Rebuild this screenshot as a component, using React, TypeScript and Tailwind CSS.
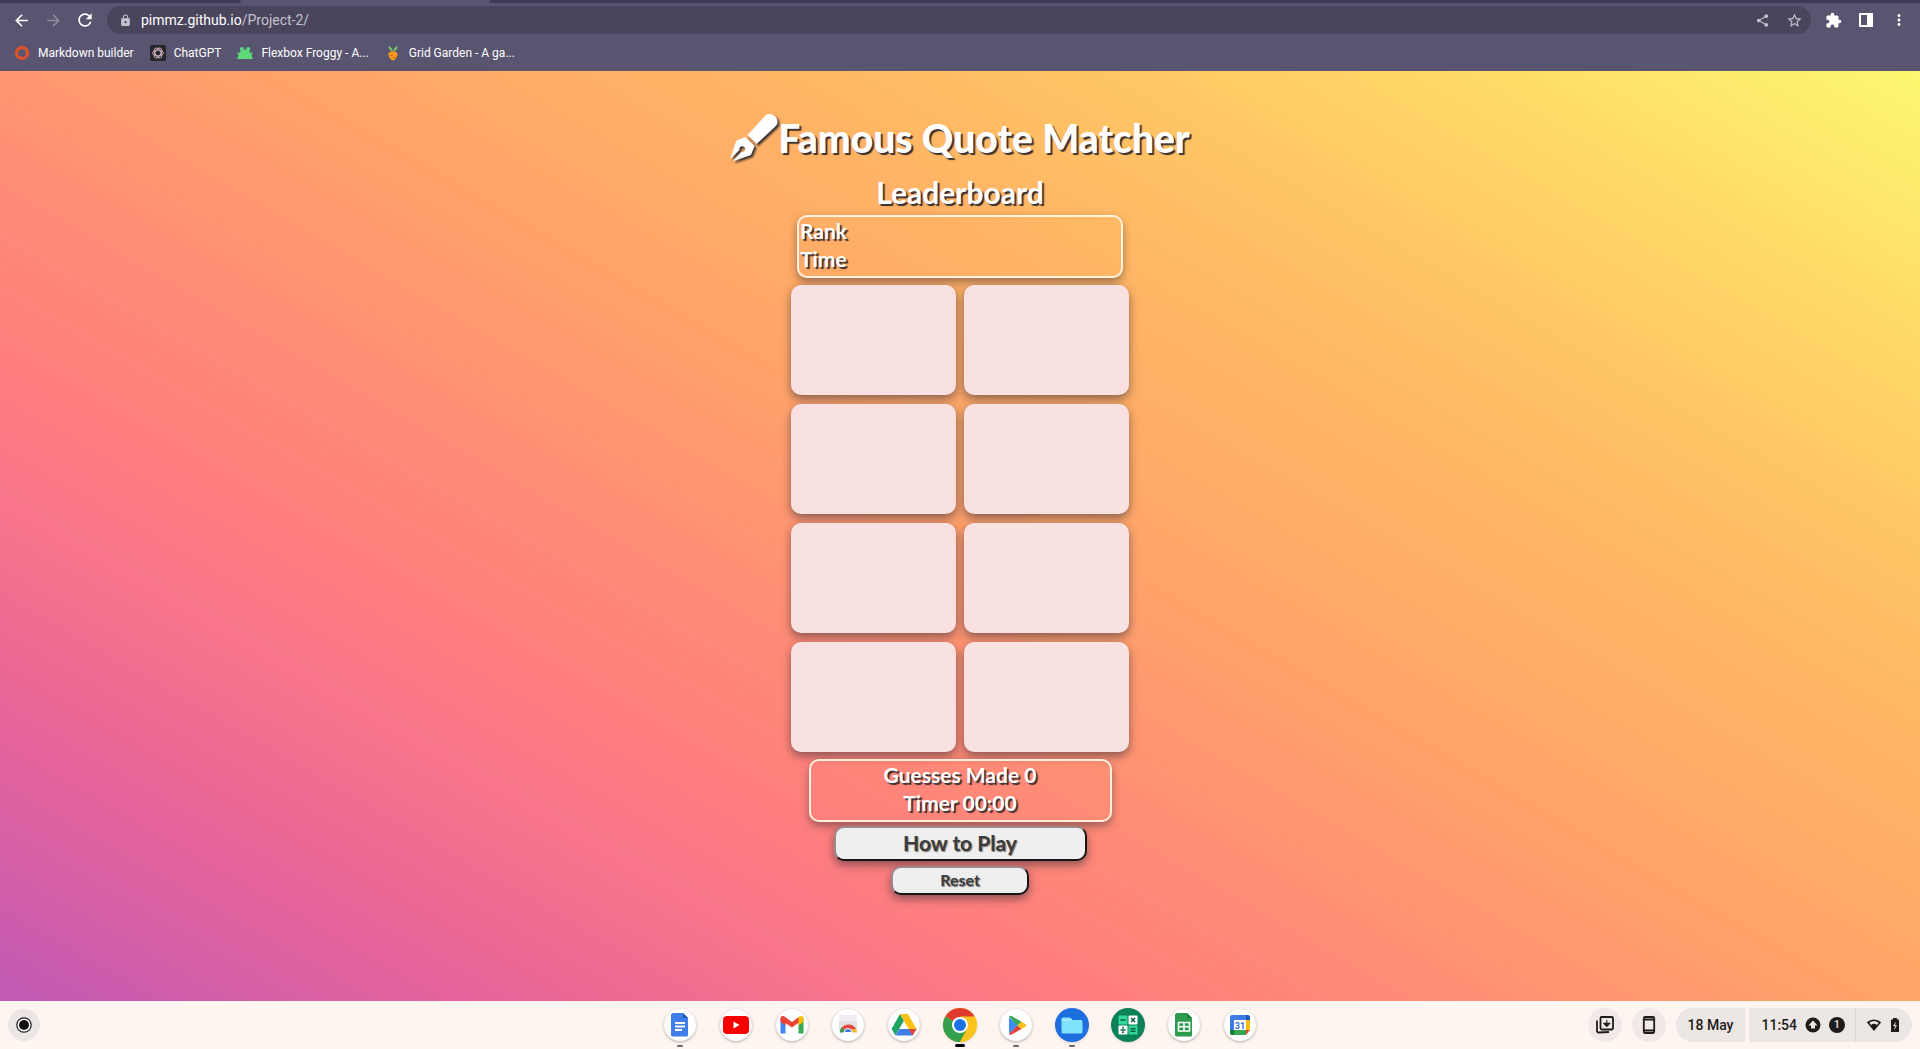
import type { ReactNode } from "react";
import {
  MdArrowBack,
  MdArrowForward,
  MdRefresh,
  MdLock,
  MdShare,
  MdStarBorder,
  MdExtension,
  MdMoreVert,
} from "react-icons/md";
import { FaPenFancy } from "react-icons/fa";

type Bookmark = { label: string; icon: ReactNode };

const bookmarks: Bookmark[] = [
  {
    label: "Markdown builder",
    icon: (
      <svg viewBox="0 0 16 16" className="size-4">
        <circle cx="8" cy="8" r="5.5" fill="none" stroke="#d9532f" strokeWidth="3.4" />
      </svg>
    ),
  },
  {
    label: "ChatGPT",
    icon: (
      <svg viewBox="0 0 16 16" className="size-4">
        <rect width="16" height="16" rx="1.5" fill="#28262b" />
        <g fill="none" stroke="#c9a9bb" strokeWidth="1">
          <ellipse cx="8" cy="8" rx="5.4" ry="2.8" />
          <ellipse cx="8" cy="8" rx="5.4" ry="2.8" transform="rotate(60 8 8)" />
          <ellipse cx="8" cy="8" rx="5.4" ry="2.8" transform="rotate(120 8 8)" />
        </g>
      </svg>
    ),
  },
  {
    label: "Flexbox Froggy - A...",
    icon: (
      <svg viewBox="0 0 16 16" className="size-4" fill="#5fd87a">
        <circle cx="4.8" cy="4" r="2" />
        <circle cx="11.2" cy="4" r="2" />
        <ellipse cx="8" cy="9" rx="5.6" ry="4.6" />
        <path d="M0 7l3 1.500h10L16 7l-1.500 3.500L16 14H0l1.500-3.500z" />
      </svg>
    ),
  },
  {
    label: "Grid Garden - A ga...",
    icon: (
      <svg viewBox="0 0 16 16" className="size-4">
        <path d="M8 6.500C7 3 5.500 1.500 3.500 1c0 3 1.500 5 4.500 5.500C11 6 12.500 4 12.500 1 10.500 1.500 9 3 8 6.500z" fill="#7cc46a" />
        <path d="M3.500 8.500C5 5.500 11 5.500 12.500 8.500c.5 3-2.500 7-4.500 7s-5-4-4.500-7z" fill="#f39a1f" />
        <path d="M5 10.500h3M8 12.500h3" stroke="#c56b10" strokeWidth="1" />
      </svg>
    ),
  },
];

type ShelfApp = { name: string; icon: ReactNode; mark?: "active" | "open" };

const apps: ShelfApp[] = [
  {
    name: "Docs",
    mark: "open",
    icon: (
      <svg viewBox="0 0 32 32">
        <path d="M9 4h10l5 5v17a1.500 1.500 0 0 1-1.500 1.500H8.500A1.500 1.500 0 0 1 7 26V6a2 2 0 0 1 2-2z" fill="#3f7de8" />
        <path d="M19 4l5 5h-5z" fill="#1f56b8" />
        <path d="M11 14h10M11 17.500h10M11 21h7" stroke="#fff" strokeWidth="1.800" />
      </svg>
    ),
  },
  {
    name: "YouTube",
    icon: (
      <svg viewBox="0 0 32 32">
        <rect x="3" y="7" width="26" height="18" rx="4" fill="#f60200" />
        <path d="M13.500 12.500v7l6-3.500z" fill="#fff" />
      </svg>
    ),
  },
  {
    name: "Gmail",
    icon: (
      <svg viewBox="0 0 32 32">
        <path d="M4.500 9v15.500h5V13z" fill="#4285f4" />
        <path d="M27.500 9v15.500h-5V13z" fill="#34a853" />
        <path d="M4.500 13V9.500c0-2.500 2.500-3 4-2L16 13l7.500-5.500 0 5.500L16 18.500 9.500 14v2.500z" fill="#ea4335" />
        <path d="M22.500 8.200l1-.7c2-1.300 4 0 4 2V13l-5 3.500z" fill="#fbbc04" />
      </svg>
    ),
  },
  {
    name: "Web Store",
    icon: (
      <svg viewBox="0 0 32 32">
        <path d="M7 6h18v6H7z" fill="#f1edf0" />
        <path d="M7 12h18v10H7z" fill="#e4e1e6" />
        <path d="M8 23.500a8.500 8.500 0 0 1 16-3.500H16z" fill="#e04a3b" />
        <path d="M8 23.500a8 8 0 0 1 2-5.500l4 5.500z" fill="#3b9b50" />
        <path d="M17 20h7a8 8 0 0 1 1 3.500h-7z" fill="#f3b72f" />
        <path d="M12 23.500a4 4 0 0 1 8 0z" fill="#4a7be0" stroke="#fff" strokeWidth="1" />
      </svg>
    ),
  },
  {
    name: "Drive",
    icon: (
      <svg viewBox="0 0 32 32">
        <path d="M12 5 3.500 20l4 6.500L16 11.500z" fill="#1fa463" />
        <path d="M12 5h8l8.500 15h-8z" fill="#fbc116" />
        <path d="M11.500 20h17l-4 6.500h-17z" fill="#3f7ee8" />
        <path d="M22.500 23.200 24.500 26.500 28.500 20h-8z" fill="#e5483a" />
      </svg>
    ),
  },
  {
    name: "Chrome",
    mark: "active",
    icon: (
      <svg viewBox="0 0 32 32" overflow="visible">
        <circle cx="16" cy="16" r="17" fill="#fbc41d" />
        <path d="M16 16 1.300 7.500A17 17 0 0 1 30.700 7.500H16z" fill="#e23b2e" />
        <path d="M16 16 1.300 7.500A17 17 0 0 0 16 33l7.400-12.700z" fill="#34a04c" />
        <path d="M16 8h14.700A17 17 0 0 1 16 33l7-13z" fill="#fbc41d" />
        <circle cx="16" cy="16" r="8" fill="#fff" />
        <circle cx="16" cy="16" r="6" fill="#1b72e6" />
      </svg>
    ),
  },
  {
    name: "Play",
    mark: "open",
    icon: (
      <svg viewBox="0 0 32 32">
        <path d="M9 8v17l9-8.500z" fill="#3f8ff0" />
        <path d="M9 7.500c.5-1 1.500-1 2.500-.5l10 5.800L17.500 16.500z" fill="#38a853" />
        <path d="M9 25c.5 1 1.500 1 2.500.5l10-5.500-4-3.500z" fill="#e5403a" />
        <path d="M21.500 12.800l4 2.300c1 .7 1 2 0 2.700l-4 2.300-4-3.600z" fill="#fbc116" />
      </svg>
    ),
  },
  {
    name: "Files",
    mark: "open",
    icon: (
      <svg viewBox="0 0 32 32" overflow="visible">
        <circle cx="16" cy="16" r="17" fill="#1d6fe0" />
        <path d="M7 8.500h7l2 2.500h9a1.500 1.500 0 0 1 1.500 1.500V23a1.500 1.500 0 0 1-1.500 1.500H7A1.500 1.500 0 0 1 5.500 23V10A1.500 1.500 0 0 1 7 8.500z" fill="#7fe3fb" />
        <path d="M6 11h8l2-1" stroke="#c5f3ff" strokeWidth="1" fill="none" />
      </svg>
    ),
  },
  {
    name: "Calculator",
    icon: (
      <svg viewBox="0 0 32 32" overflow="visible">
        <circle cx="16" cy="16" r="17" fill="#0c8259" />
        <rect x="6.500" y="6.500" width="9" height="9" rx="1" fill="#33d69a" />
        <rect x="16.500" y="6.500" width="9" height="9" rx="1" fill="#fff" />
        <rect x="6.500" y="16.500" width="9" height="9" rx="1" fill="#fff" />
        <rect x="16.500" y="16.500" width="9" height="9" rx="1" fill="#33d69a" />
        <g stroke="#0b5c41" strokeWidth="1.500">
          <path d="M8.500 11h5M19 9l4 4M23 9l-4 4M8.500 21h5M18.500 19.800h5M18.500 22.300h5" />
        </g>
        <circle cx="11" cy="18.700" r="1" fill="#0b5c41" />
        <circle cx="11" cy="23.300" r="1" fill="#0b5c41" />
      </svg>
    ),
  },
  {
    name: "Sheets",
    icon: (
      <svg viewBox="0 0 32 32">
        <path d="M9 4h10l5 5v17a1.500 1.500 0 0 1-1.500 1.500H8.500A1.500 1.500 0 0 1 7 26V6a2 2 0 0 1 2-2z" fill="#2c9b4e" />
        <path d="M19 4l5 5h-5z" fill="#187a38" />
        <path d="M10.500 13.500h11v8.500h-11zM16 13.500V22M10.500 17.700h11" stroke="#fff" strokeWidth="1.600" fill="none" />
      </svg>
    ),
  },
  {
    name: "Calendar",
    icon: (
      <svg viewBox="0 0 32 32">
        <path d="M8 6h14v5H11v14H8a2 2 0 0 1-2-2V8a2 2 0 0 1 2-2z" fill="#3c7be6" />
        <path d="M22 6h2a2 2 0 0 1 2 2v3h-4z" fill="#1a58bf" />
        <path d="M22 11h4v10h-4z" fill="#fbbc04" />
        <path d="M10 21h12v5H10z" fill="#34a853" />
        <path d="M6 21h4.500v5H8a2 2 0 0 1-2-2z" fill="#188038" />
        <path d="M22 21h4l-4 5z" fill="#ea4335" />
        <rect x="10" y="11" width="12" height="10" fill="#fff" />
        <text x="16" y="19.500" textAnchor="middle" fontSize="9" fontWeight="700" fontFamily="Roboto, sans-serif" fill="#3c6fd6">31</text>
      </svg>
    ),
  },
];

function BrowserBar() {
  return (
    <header className="bg-[#59546f] font-[Roboto,sans-serif] text-white">
      <div className="flex h-[3px] bg-[#3f3857]">
        <span className="ml-60 w-[250px] rounded-b-sm bg-[#59546f]" />
      </div>
      <div className="flex h-[34px] items-center pr-3 pl-3">
        <button aria-label="Back"><MdArrowBack size={19} /></button>
        <button aria-label="Forward" className="ml-[13px] text-[#8f8ba0]"><MdArrowForward size={19} /></button>
        <button aria-label="Reload" className="ml-3"><MdRefresh size={20} /></button>
        <div className="ml-3 flex h-7 flex-1 items-center rounded-full bg-[#4a455d] pr-2 pl-3 text-[#c5c2cf]">
          <MdLock size={13} />
          <div className="ml-[9px] flex-1 text-sm">
            <span className="text-white">pimmz.github.io</span>/Project-2/
          </div>
          <button aria-label="Share"><MdShare size={15} /></button>
          <button aria-label="Bookmark this page" className="ml-4"><MdStarBorder size={17} /></button>
        </div>
        <button aria-label="Extensions" className="ml-[14px]"><MdExtension size={17} /></button>
        <button aria-label="Side panel" className="ml-4">
          <svg viewBox="0 0 16 16" className="size-4">
            <path d="M1 1h14v14H1zM3 3v10h6V3z" fill="currentColor" fillRule="evenodd" />
          </svg>
        </button>
        <button aria-label="Menu" className="ml-4"><MdMoreVert size={18} /></button>
      </div>
      <nav aria-label="Bookmarks" className="flex h-[34px] items-center gap-4 pb-[6px] pl-[14px] pt-1 text-xs">
        {bookmarks.map((b) => (
          <a key={b.label} href="#" className="flex items-center gap-2">
            {b.icon}
            {b.label}
          </a>
        ))}
      </nav>
    </header>
  );
}

function Game() {
  return (
    <main className="flex flex-1 flex-col items-center bg-[linear-gradient(30deg,#c05ab4_0%,#cc5cad_4%,#d660a5_8%,#e2629e_12%,#ee6a92_18%,#f9768a_25%,#ff7f7d_32%,#ff8d75_41%,#ffa569_54%,#ffb265_65%,#ffc464_76%,#ffdc68_88%,#fcf870_100%)] pt-9 font-[Lato,sans-serif] font-bold text-white [text-shadow:2px_2px_1px_#3a3030]">
      <h1 className="flex h-[62px] items-center text-[39px] font-black">
        <FaPenFancy size={48} className="pb-px drop-shadow-[2px_2px_1px_#3a3030]" />
        Famous Quote Matcher
      </h1>
      <h2 className="mt-1 flex h-10 items-center pb-px text-[30px]">Leaderboard</h2>
      <section className="mt-[2px] w-[326px] rounded-[10px] border-2 border-[#fff3dc] px-px pb-[3px] text-[21px] leading-[28px] shadow-[0_4px_8px_rgba(60,50,60,0.5)]">
        <p>Rank</p>
        <p>Time</p>
      </section>
      <div className="mt-[7px] grid grid-cols-2 gap-x-2 gap-y-[9px]">
        {Array.from({ length: 8 }, (_, i) => (
          <button
            key={i}
            aria-label={`Card ${i + 1}`}
            className="h-[110px] w-[165px] rounded-[10px] bg-[#f9e1e1] shadow-[0_4px_10px_rgba(60,50,60,0.6)]"
          />
        ))}
      </div>
      <section className="mt-[7px] w-[303px] rounded-[10px] border-2 border-[#fff0dc] pb-[3px] text-center text-[21px] leading-[28px] shadow-[0_4px_8px_rgba(60,50,60,0.5)]">
        <p>Guesses Made 0</p>
        <p>Timer 00:00</p>
      </section>
      <button className="mt-1 h-[35px] w-[253px] rounded-[10px] border-2 border-t-[#9a8a8a] border-r-[#1a1414] border-b-[#1a1414] border-l-[#9a8a8a] bg-[#efefef] pb-[2px] text-[21px] leading-none text-[#3c3c3c] shadow-[0_4px_10px_rgba(60,50,60,0.6)] [text-shadow:1px_1px_1px_#777]">
        How to Play
      </button>
      <button className="mt-[5px] h-[29px] w-[138px] rounded-[10px] border-2 border-t-[#9a8a8a] border-r-[#1a1414] border-b-[#1a1414] border-l-[#9a8a8a] bg-[#efefef] pb-[2px] text-base leading-none text-[#3c3c3c] shadow-[0_4px_10px_rgba(60,50,60,0.6)] [text-shadow:1px_1px_1px_#777]">
        Reset
      </button>
    </main>
  );
}

function Shelf() {
  return (
    <footer className="grid h-12 grid-cols-[1fr_auto_1fr] items-center bg-[#fef5f0] px-2 font-[Roboto,sans-serif] text-[#1f1b1b]">
      <button aria-label="Launcher" className="flex size-8 items-center justify-center rounded-full bg-[#ece6e4]">
        <svg viewBox="0 0 16 16" className="size-4">
          <circle cx="8" cy="8" r="7.200" fill="#fff" stroke="#1f1b1b" strokeWidth="1.200" />
          <circle cx="8" cy="8" r="5" fill="#111" />
        </svg>
      </button>
      <nav aria-label="Apps" className="flex gap-6">
        {apps.map((a) => (
          <button key={a.name} aria-label={a.name} className="relative size-8 rounded-full bg-white p-0 shadow-[0_1px_3px_rgba(0,0,0,0.3)]">
            {a.icon}
            {a.mark === "active" && <span className="absolute -bottom-[6px] left-[11px] h-[3px] w-[10px] rounded-full bg-black" />}
            {a.mark === "open" && <span className="absolute -bottom-[6px] left-[13px] h-[2px] w-[6px] rounded-full bg-[#6a6564]" />}
          </button>
        ))}
      </nav>
      <div className="flex items-center justify-end text-sm font-medium">
        <button aria-label="Desks" className="flex size-[34px] items-center justify-center rounded-full bg-[#f0e9e7]">
          <svg viewBox="0 0 20 20" className="size-5" fill="none" stroke="#1f1b1b" strokeWidth="1.800">
            <rect x="5.500" y="2" width="12.500" height="12.500" rx="1.200" />
            <path d="M2 5.500v10.500a1.500 1.500 0 0 0 1.700 1.500L14 17" />
            <path d="M11.800 4.800v5M8.500 8.200h6.600l-3.300 3.600z" fill="#1f1b1b" strokeWidth="1" />
          </svg>
        </button>
        <button aria-label="Phone Hub" className="ml-[10px] flex size-[34px] items-center justify-center rounded-full bg-[#f0e9e7]">
          <svg viewBox="0 0 20 20" className="size-5" fill="none" stroke="#1f1b1b" strokeWidth="1.800">
            <rect x="4.800" y="2" width="10.400" height="16" rx="1.200" />
            <path d="M4.800 4.500h10.400M4.800 15.500h10.400" />
          </svg>
        </button>
        <button className="ml-[10px] h-[34px] rounded-l-full rounded-r-sm bg-[#ece6e4] pr-3 pl-3">18 May</button>
        <button className="ml-1 flex h-[34px] items-center rounded-l-sm rounded-r-full bg-[#ece6e4] pr-3 pl-3">
          11:54
          <svg viewBox="0 0 16 16" className="ml-2 size-4">
            <circle cx="8" cy="8" r="7.500" fill="#1f1b1b" />
            <path d="M8 3.500 12.500 8.500H10v3H6v-3H3.500z" fill="#ece6e4" />
          </svg>
          <span className="ml-2 flex size-4 items-center justify-center rounded-full bg-[#1f1b1b] text-[11px] text-[#ece6e4]">1</span>
          <span className="mx-[10px] h-[34px] w-px bg-[#dcd5d3]" />
          <svg viewBox="0 0 16 16" className="size-4">
            <path d="M8 14 .8 5.200a11 11 0 0 1 14.400 0z" fill="#1f1b1b" />
            <path d="M3.300 5.800a8 8 0 0 1 9.400 0L11 7.900a5 5 0 0 0-6 0z" fill="#ece6e4" />
          </svg>
          <svg viewBox="0 0 10 16" className="ml-2 h-4 w-[10px]">
            <path d="M3 1h4v1.500h2V15H1V2.500h2z" fill="#1f1b1b" />
            <path d="M6 4.500 3 9h2l-1 4 3-4.800H5z" fill="#ece6e4" />
          </svg>
        </button>
      </div>
    </footer>
  );
}

export default function App() {
  return (
    <div className="flex min-h-screen flex-col">
      <BrowserBar />
      <Game />
      <Shelf />
    </div>
  );
}
